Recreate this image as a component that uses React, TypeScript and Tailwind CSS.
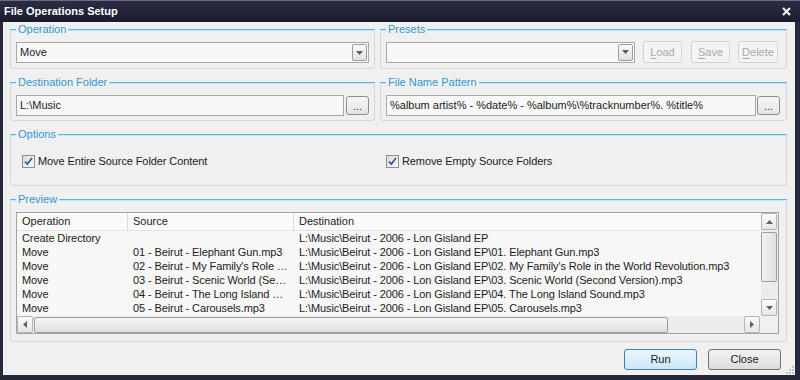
import type { ReactNode } from 'react'

const ROWS: Array<{ op: string; src: string; dst: string }> = [
  { op: 'Create Directory', src: '', dst: 'L:\\Music\\Beirut - 2006 - Lon Gisland EP' },
  { op: 'Move', src: '01 - Beirut - Elephant Gun.mp3', dst: 'L:\\Music\\Beirut - 2006 - Lon Gisland EP\\01. Elephant Gun.mp3' },
  { op: 'Move', src: "02 - Beirut - My Family's Role …", dst: "L:\\Music\\Beirut - 2006 - Lon Gisland EP\\02. My Family's Role in the World Revolution.mp3" },
  { op: 'Move', src: '03 - Beirut - Scenic World (Se…', dst: 'L:\\Music\\Beirut - 2006 - Lon Gisland EP\\03. Scenic World (Second Version).mp3' },
  { op: 'Move', src: '04 - Beirut - The Long Island …', dst: 'L:\\Music\\Beirut - 2006 - Lon Gisland EP\\04. The Long Island Sound.mp3' },
  { op: 'Move', src: '05 - Beirut - Carousels.mp3', dst: 'L:\\Music\\Beirut - 2006 - Lon Gisland EP\\05. Carousels.mp3' },
]

function Group({ title, className, children }: { title: string; className?: string; children: ReactNode }) {
  return (
    <div className={`mt-[7px] flex flex-col rounded-b-[4px] border-x border-b border-[#d6d6d6] ${className ?? ''}`}>
      <div className="-mx-px -mt-[7px] flex h-[14px] items-center">
        <div className="h-px w-[6px] bg-[#55b6e4] shadow-[0_1px_0_#c4e5f5]" />
        <span className="px-[2px] text-[11px] leading-[14px] text-[#3197d0]">{title}</span>
        <div className="h-px flex-1 bg-[#55b6e4] shadow-[0_1px_0_#c4e5f5]" />
      </div>
      {children}
    </div>
  )
}

function Arrow({ dir, color = '#5c5c5c' }: { dir: 'up' | 'down' | 'left' | 'right'; color?: string }) {
  const d = {
    up: 'M0 4h7L3.5 0z',
    down: 'M0 0h7L3.5 4z',
    left: 'M4 0v7L0 3.5z',
    right: 'M0 0v7L4 3.5z',
  }[dir]
  const w = dir === 'up' || dir === 'down' ? 7 : 4
  const h = dir === 'up' || dir === 'down' ? 4 : 7
  return (
    <svg width={w} height={h} viewBox={`0 0 ${w} ${h}`}>
      <path d={d} fill={color} />
    </svg>
  )
}

function Combo({ value, className }: { value: string; className?: string }) {
  return (
    <div className={`flex h-[21px] items-center border border-[#a9a9a9] bg-[#f8f8f8] pl-[3px] pr-[1px] ${className ?? ''}`}>
      <span className="flex-1 text-[11px] text-[#1b1b2b]">{value}</span>
      <div className="flex h-[17px] w-[15px] items-center justify-center rounded-[2px] border border-[#9c9c9c] bg-gradient-to-b from-[#fbfbfb] to-[#e1e1e1]">
        <Arrow dir="down" />
      </div>
    </div>
  )
}

function DisabledButton({ label, className }: { label: string; className?: string }) {
  return (
    <div className={`flex h-[22px] items-center justify-center rounded-[3px] border border-[#d2d2d2] bg-[#f4f4f4] text-[11px] text-[#a9a9a9] ${className ?? ''}`}>
      <span className="underline decoration-[#a9a9a9] underline-offset-2 [text-decoration-skip-ink:none]">{label[0]}</span>
      {label.slice(1)}
    </div>
  )
}

function Browse() {
  return (
    <div className="flex h-[19px] w-[23px] items-end justify-center rounded-[3px] border border-[#8e8e8e] bg-gradient-to-b from-[#f7f7f7] to-[#e4e4e4] pb-[2px] text-[11px] leading-[12px] text-[#333]">
      ...
    </div>
  )
}

function TextBox({ value, className }: { value: string; className?: string }) {
  return (
    <div className={`flex h-[21px] items-center border border-[#a9a9a9] bg-[#f8f8f8] pl-[3px] text-[11px] text-[#1b1b1b] ${className ?? ''}`}>
      {value}
    </div>
  )
}

function CheckBox({ label }: { label: string }) {
  return (
    <div className="flex items-center gap-[3px]">
      <div className="flex h-[13px] w-[13px] items-center justify-center border border-[#8f8f8f] bg-gradient-to-br from-[#dcdcdc] to-[#fafafa]">
        <svg width="9" height="9" viewBox="0 0 9 9">
          <path d="M1 4.5l2.3 2.6L8 1" fill="none" stroke="#3c5d9a" strokeWidth="1.8" />
        </svg>
      </div>
      <span className="text-[11px] tracking-[-0.1px] text-[#1b1b1b]">{label}</span>
    </div>
  )
}

function ScrollButton({ dir }: { dir: 'up' | 'down' | 'left' | 'right' }) {
  return (
    <div className="flex h-[17px] w-[16px] items-center justify-center rounded-[2px] border border-[#b4b4b4] bg-gradient-to-b from-[#fbfbfb] to-[#e6e6e6]">
      <Arrow dir={dir} color="#606060" />
    </div>
  )
}

function ListView() {
  return (
    <div className="flex h-[122px] w-[763px] flex-col border border-[#a3a3a3] bg-[#f7f7f7]">
      <div className="flex h-[103px]">
        <div className="flex flex-1 flex-col">
          <div className="flex h-[18px] items-center border-b border-[#e2e2e2] bg-[#fafafa] text-[11px] text-[#1b1b1b]">
            <div className="w-[110px] pl-[5px]">Operation</div>
            <div className="h-full w-px bg-[#dadada]" />
            <div className="w-[165px] pl-[5px]">Source</div>
            <div className="h-full w-px bg-[#dadada]" />
            <div className="flex-1 pl-[5px]">Destination</div>
          </div>
          {ROWS.map((r, i) => (
            <div key={i} className="flex h-[14px] items-center text-[11px] leading-[14px] tracking-[-0.1px] text-[#1b1b1b]">
              <div className="w-[111px] pl-[5px]">{r.op}</div>
              <div className="w-[166px] whitespace-nowrap pl-[5px]">{r.src}</div>
              <div className="flex-1 whitespace-nowrap pl-[5px]">{r.dst}</div>
            </div>
          ))}
        </div>
        <div className="flex w-[17px] flex-col items-start bg-[#ececec]">
          <ScrollButton dir="up" />
          <div className="mt-[2px] h-[50px] w-[16px] rounded-[2px] border border-[#9d9d9d] bg-gradient-to-r from-[#f4f4f4] to-[#dedede]" />
          <div className="flex-1" />
          <ScrollButton dir="down" />
        </div>
      </div>
      <div className="flex h-[17px] items-center bg-[#ececec]">
        <ScrollButton dir="left" />
        <div className="ml-[1px] h-[16px] w-[634px] rounded-[2px] border border-[#9d9d9d] bg-gradient-to-b from-[#f6f6f6] to-[#dedede]" />
        <div className="flex-1" />
        <ScrollButton dir="right" />
        <div className="h-full w-[18px] bg-[#f0f0f0]" />
      </div>
    </div>
  )
}

export default function App() {
  return (
    <div className="flex h-[380px] w-[800px] flex-col bg-[#25273a] font-['Segoe_UI','Liberation_Sans',Arial,sans-serif]">
      {/* Title bar */}
      <div className="flex h-[22px] items-center border-t border-[#6a6c7e] bg-gradient-to-b from-[#2c2d44] to-[#1b1b2e] pl-[4px] pr-[9px]">
        <span className="flex-1 text-[11px] font-bold text-white">File Operations Setup</span>
        <svg width="9" height="9" viewBox="0 0 9 9">
          <path d="M1 1l7 7M8 1L1 8" stroke="#f4f4f4" strokeWidth="2.2" />
        </svg>
      </div>

      {/* Client area */}
      <div className="relative mb-[5px] ml-[3px] mr-[5px] flex flex-1 flex-col bg-[#f0f0f0] pl-[7px] pr-[8px]">
        <div className="flex gap-[5px]">
          <Group title="Operation" className="w-[365px]">
            <div className="px-[5px] pb-[5px] pt-[6px]">
              <Combo value="Move" />
            </div>
          </Group>
          <Group title="Presets" className="w-[407px]">
            <div className="flex items-center pb-[4px] pl-[5px] pt-[5px]">
              <Combo value="" className="w-[249px]" />
              <DisabledButton label="Load" className="ml-[8px] w-[39px]" />
              <DisabledButton label="Save" className="ml-[9px] w-[39px]" />
              <DisabledButton label="Delete" className="ml-[8px] w-[40px]" />
            </div>
          </Group>
        </div>

        <div className="mt-[6px] flex gap-[5px]">
          <Group title="Destination Folder" className="w-[365px]">
            <div className="flex items-center gap-[2px] px-[5px] pb-[4px] pt-[6px]">
              <TextBox value="L:\Music" className="flex-1" />
              <Browse />
            </div>
          </Group>
          <Group title="File Name Pattern" className="w-[407px]">
            <div className="flex items-center gap-[1px] pb-[4px] pl-[5px] pr-[6px] pt-[6px]">
              <TextBox value="%album artist% - %date% - %album%\%tracknumber%. %title%" className="flex-1" />
              <Browse />
            </div>
          </Group>
        </div>

        <Group title="Options" className="mt-[13px] w-[777px]">
          <div className="flex h-[44px] items-start pl-[11px] pt-[12px]">
            <div className="w-[364px]">
              <CheckBox label="Move Entire Source Folder Content" />
            </div>
            <CheckBox label="Remove Empty Source Folders" />
          </div>
        </Group>

        <Group title="Preview" className="mt-[13px] w-[777px]">
          <div className="pb-[7px] pl-[5px] pt-[6px]">
            <ListView />
          </div>
        </Group>

        <div className="mt-[7px] flex justify-end gap-[11px] pr-[6px]">
          <div className="flex h-[21px] w-[73px] items-center justify-center rounded-[3px] border border-[#3c80b4] bg-gradient-to-b from-[#eaf6fd] to-[#cbe7f8] text-[11px] text-[#1b1b2b]">
            Run
          </div>
          <div className="flex h-[21px] w-[73px] items-center justify-center rounded-[3px] border border-[#707070] bg-gradient-to-b from-[#f3f3f3] to-[#dcdcdc] text-[11px] text-[#1b1b2b]">
            Close
          </div>
        </div>

        {/* resize grip */}
        <svg className="absolute bottom-[1px] right-[1px]" width="10" height="10" viewBox="0 0 10 10">
          {[[8, 2], [8, 5], [5, 5], [8, 8], [5, 8], [2, 8]].map(([x, y], i) => (
            <rect key={i} x={x} y={y} width="2" height="2" fill="#c4c4c4" />
          ))}
        </svg>
      </div>
    </div>
  )
}
